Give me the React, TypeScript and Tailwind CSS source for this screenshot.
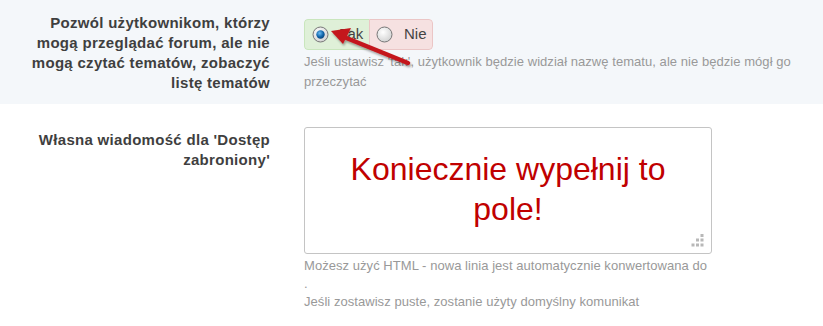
import React from 'react';

function Radio({ checked }: { checked?: boolean }) {
  return (
    <svg width="17" height="17" viewBox="0 0 17 17" className="shrink-0">
      <defs>
        <radialGradient id={checked ? 'rg-on' : 'rg-off'} cx="0.4" cy="0.35" r="0.7">
          <stop offset="0" stopColor="#ffffff" />
          <stop offset="1" stopColor="#d0d0d0" />
        </radialGradient>
        <radialGradient id="dot" cx="0.4" cy="0.35" r="0.7">
          <stop offset="0" stopColor="#6cbcf5" />
          <stop offset="0.6" stopColor="#1166aa" />
          <stop offset="1" stopColor="#0a3f73" />
        </radialGradient>
      </defs>
      <circle cx="8.5" cy="8.5" r="7.5" fill={checked ? 'url(#rg-on)' : 'url(#rg-off)'} stroke="#777" strokeWidth="1" />
      {checked && <circle cx="8.5" cy="8.5" r="4.2" fill="url(#dot)" />}
    </svg>
  );
}

export default function App() {
  return (
    <div className="relative w-[823px] h-[326px] bg-white text-[#444] overflow-hidden" style={{ fontFamily: '"Liberation Sans", Arial, sans-serif' }}>
      {/* Row 1: radio option */}
      <div className="flex bg-[#f4f7fa] h-[104px] pt-[13px]">
        <div className="w-[270px] pl-[20px] text-right font-bold text-[15px] tracking-[0.3px] leading-[20px] text-[#3f3f3f]">
          Pozwól użytkownikom, którzy mogą przeglądać forum, ale nie mogą czytać tematów, zobaczyć listę tematów
        </div>
        <div className="ml-[34px] w-[510px] pt-[6px]">
          <div className="flex w-[129px] h-[31px] rounded-[4px] overflow-hidden">
            <label className="flex items-center pl-[7px] w-[65px] bg-[#dff0d8] border border-r-0 border-[#c9e6bd] rounded-l-[4px] text-[15px]">
              <Radio checked />
              <span className="ml-[11px]">Tak</span>
            </label>
            <label className="flex items-center pl-[6px] flex-1 bg-[#f6e1e1] border border-[#ebc6c6] rounded-r-[4px] text-[15px]">
              <Radio />
              <span className="ml-[11px]">Nie</span>
            </label>
          </div>
          <p className="mt-[2px] text-[13px] tracking-[0.05px] leading-[20px] text-[#999]">
            Jeśli ustawisz 'tak', użytkownik będzie widział nazwę tematu, ale nie będzie mógł go przeczytać
          </p>
        </div>
      </div>

      {/* Row 2: textarea */}
      <div className="flex pt-[23px]">
        <div className="w-[270px] pl-[20px] pt-[3px] text-right font-bold text-[15px] tracking-[0.3px] leading-[20px] text-[#3f3f3f]">
          Własna wiadomość dla 'Dostęp zabroniony'
        </div>
        <div className="ml-[34px] w-[495px]">
          <div className="relative w-[408px] h-[127px] border border-[#c4c4c4] rounded-[3px] bg-white flex items-center justify-center px-6">
            <p className="text-center text-[32px] leading-[40px] text-[#c00000] pb-[3px]">
              Koniecznie wypełnij to pole!
            </p>
            <svg className="absolute right-[7px] bottom-[6px]" width="13" height="13" viewBox="0 0 13 13">
              <rect x="9.5" y="0" width="3" height="3" fill="#b8b8b8" />
              <rect x="5" y="4.5" width="3" height="3" fill="#b8b8b8" />
              <rect x="9.5" y="4.5" width="3" height="3" fill="#b8b8b8" />
              <rect x="0.5" y="9.5" width="3" height="3" fill="#b8b8b8" />
              <rect x="5" y="9.5" width="3" height="3" fill="#b8b8b8" />
              <rect x="9.5" y="9.5" width="3" height="3" fill="#b8b8b8" />
            </svg>
          </div>
          <p className="mt-[3px] text-[13px] tracking-[0.05px] leading-[18px] text-[#999]">
            Możesz użyć HTML - nowa linia jest automatycznie konwertowana do
            <br />.
            <br />Jeśli zostawisz puste, zostanie użyty domyślny komunikat
          </p>
        </div>
      </div>

      {/* Annotation arrow */}
      <svg className="absolute left-0 top-0 pointer-events-none" width="823" height="326">
        <defs>
          <filter id="sh" x="-20%" y="-20%" width="140%" height="140%">
            <feDropShadow dx="1" dy="2" stdDeviation="1.2" floodColor="#000" floodOpacity="0.35" />
          </filter>
        </defs>
        <g filter="url(#sh)">
          <line x1="408" y1="63" x2="344" y2="37" stroke="#c4161c" strokeWidth="4.5" strokeLinecap="round" />
          <polygon points="331,31 351,28 343,44" fill="#c4161c" />
        </g>
      </svg>
    </div>
  );
}
